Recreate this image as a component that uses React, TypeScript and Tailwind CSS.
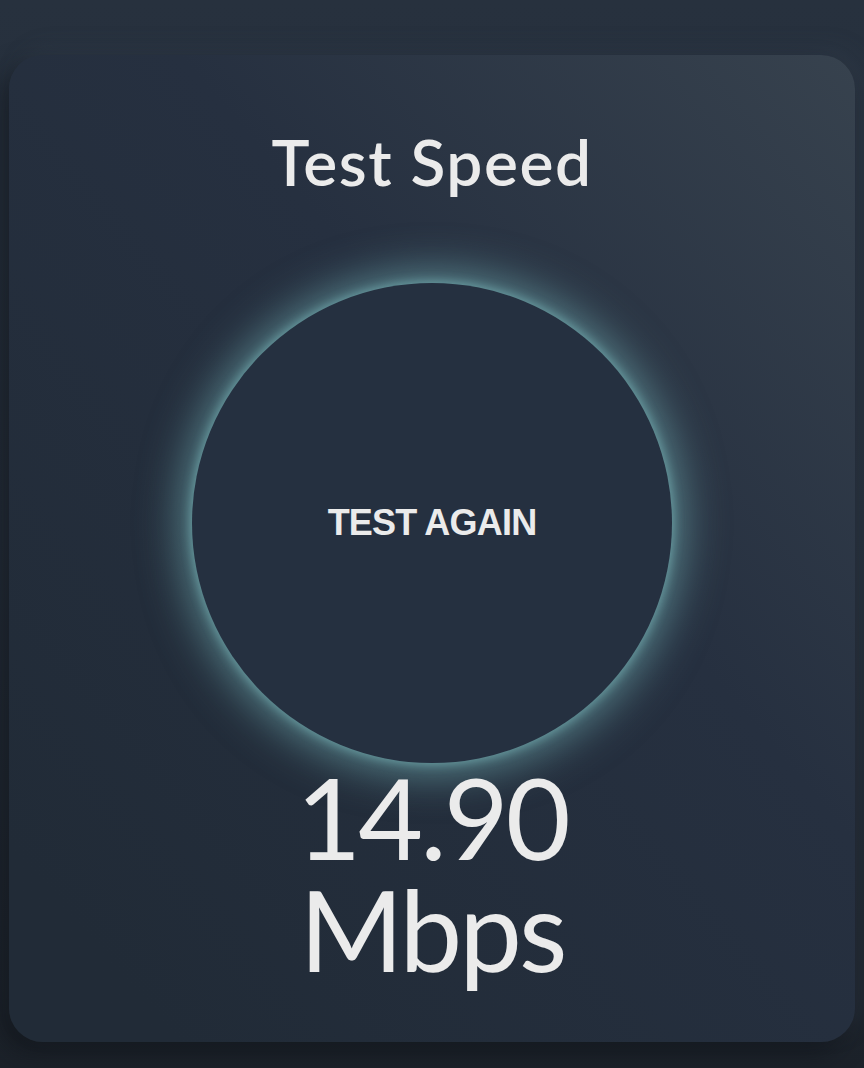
import React from "react";

const SpeedCard = () => {
  return (
    <div className="mx-[9px] mt-[55px] flex h-[987px] flex-col items-center rounded-[34px] bg-gradient-to-tr from-[#212b37] from-[10%] via-[#263040] via-[60%] to-[#37424e] shadow-[-10px_12px_24px_rgba(14,18,24,0.55),8px_-8px_20px_rgba(60,72,86,0.25)]">
      <h1 className="mt-[75px] font-['Lato',sans-serif] text-[64px] font-semibold leading-[64px] tracking-[1.5px] text-[#ebebeb]">
        Test Speed
      </h1>

      <button className="mt-[89px] flex h-[480px] w-[480px] items-center justify-center rounded-full bg-[#253040] shadow-[0_0_44px_10px_rgba(112,172,176,0.7),0_0_10px_2px_rgba(130,190,192,0.6)]">
        <span className="font-['Liberation_Sans',Arial,sans-serif] text-[36px] font-bold tracking-[-0.8px] text-[#ebebeb]">
          TEST AGAIN
        </span>
      </button>

      <p className="-mt-[2px] text-center font-['Lato',sans-serif] text-[112px] font-normal leading-[112px] tracking-[-3px] text-[#ebebeb]">
        14.90
        <br />
        Mbps
      </p>
    </div>
  );
};

const App = () => {
  return (
    <div className="min-h-[1068px] w-full overflow-hidden bg-gradient-to-b from-[#27313e] via-[#242d39] to-[#1c222a] pb-[26px]">
      <SpeedCard />
    </div>
  );
};

export default App;
